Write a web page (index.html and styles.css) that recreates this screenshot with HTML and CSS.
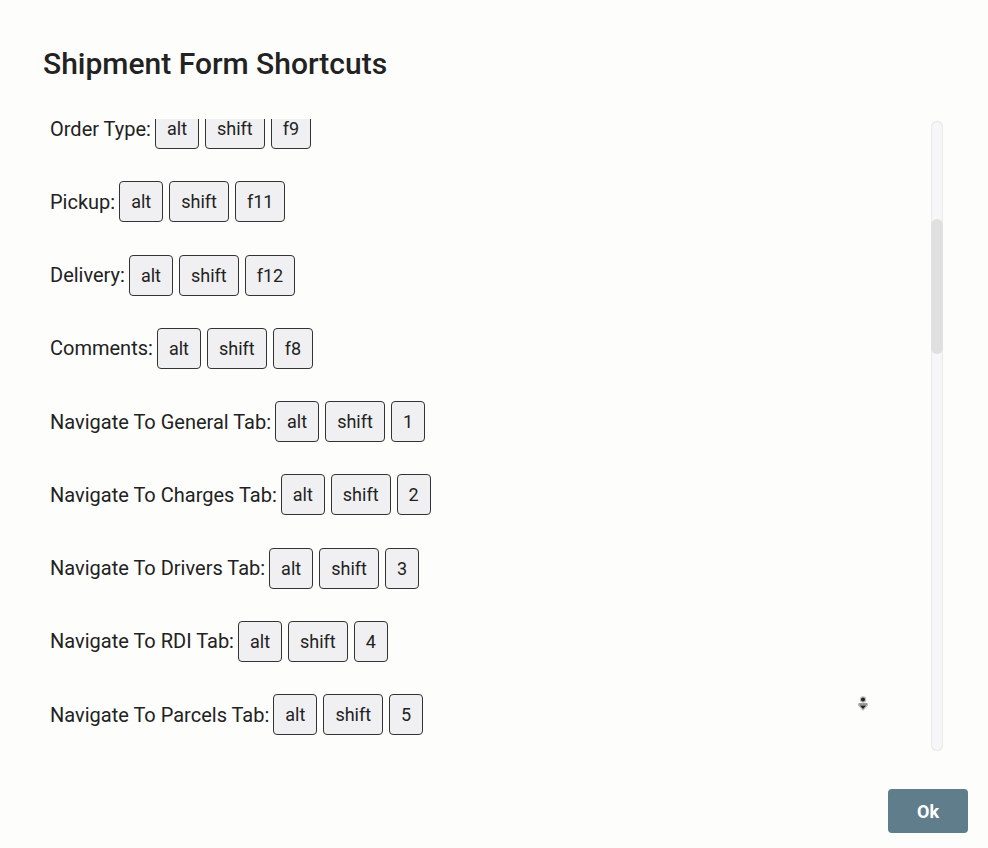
FILE: index.html
```html
<!DOCTYPE html>
<html lang="en">

<head>
    <meta charset="UTF-8">
    <title>Shipment Form Shortcuts</title>
    <link rel="stylesheet" href="styles.css">
</head>

<body>
    <div class="dialog">
        <h2 class="dialog-title">Shipment Form Shortcuts</h2>

        <div class="dialog-body">
            <div class="shortcut-list" id="list">
                <div class="shortcut">
                    <span class="shortcut-name">Order Type:</span>
                    <kbd>alt</kbd><kbd>shift</kbd><kbd>f9</kbd>
                </div>
                <div class="shortcut">
                    <span class="shortcut-name">Pickup:</span>
                    <kbd>alt</kbd><kbd>shift</kbd><kbd>f11</kbd>
                </div>
                <div class="shortcut">
                    <span class="shortcut-name">Delivery:</span>
                    <kbd>alt</kbd><kbd>shift</kbd><kbd>f12</kbd>
                </div>
                <div class="shortcut">
                    <span class="shortcut-name">Comments:</span>
                    <kbd>alt</kbd><kbd>shift</kbd><kbd>f8</kbd>
                </div>
                <div class="shortcut">
                    <span class="shortcut-name">Navigate To General Tab:</span>
                    <kbd>alt</kbd><kbd>shift</kbd><kbd>1</kbd>
                </div>
                <div class="shortcut">
                    <span class="shortcut-name">Navigate To Charges Tab:</span>
                    <kbd>alt</kbd><kbd>shift</kbd><kbd>2</kbd>
                </div>
                <div class="shortcut">
                    <span class="shortcut-name">Navigate To Drivers Tab:</span>
                    <kbd>alt</kbd><kbd>shift</kbd><kbd>3</kbd>
                </div>
                <div class="shortcut">
                    <span class="shortcut-name">Navigate To RDI Tab:</span>
                    <kbd>alt</kbd><kbd>shift</kbd><kbd>4</kbd>
                </div>
                <div class="shortcut">
                    <span class="shortcut-name">Navigate To Parcels Tab:</span>
                    <kbd>alt</kbd><kbd>shift</kbd><kbd>5</kbd>
                </div>
            </div>

            <div class="scroll-track">
                <div class="scroll-thumb"></div>
            </div>

            <!-- autoscroll cursor left over on the page -->
            <svg class="cursor" width="12" height="16" viewBox="0 0 12 16">
                <circle cx="6" cy="3.5" r="2.6" fill="#222" stroke="#bbb" stroke-width="1.2" />
                <path d="M1.5 9 L10.5 9 L6 14 Z" fill="#222" stroke="#bbb" stroke-width="1.2" stroke-linejoin="round" />
                <rect x="1.5" y="7.2" width="9" height="1.6" fill="#888" />
            </svg>
        </div>

        <div class="dialog-actions">
            <button class="btn-ok">Ok</button>
        </div>
    </div>
    <script>
        // list is scrolled a little, the first row is cut at the top
        document.getElementById('list').scrollTop = 11
    </script>
</body>

</html>
```
FILE: styles.css
```css
* {
    margin: 0;
    padding: 0;
    box-sizing: border-box;
}

body {
    background-color: #fdfdfc;
    font-family: Roboto, "Liberation Sans", Arial, sans-serif;
    color: #222;
    width: 988px;
    height: 848px;
    overflow: hidden;
}

.dialog {
    display: flex;
    flex-direction: column;
    height: 848px;
    padding: 46px 20px 15px 43px;
}

.dialog-title {
    font-size: 30px;
    font-weight: 500;
    line-height: 36px;
    color: #222;
    margin-bottom: 37px;
}

.dialog-body {
    position: relative;
    display: flex;
    height: 633px;
}

.shortcut-list {
    flex: 1;
    overflow: hidden;
    padding: 0 0 40px 7px;
    display: flex;
    flex-direction: column;
    gap: 32.25px;
}

.shortcut {
    display: flex;
    align-items: center;
    gap: 6px;
    height: 41px;
    flex-shrink: 0;
}

.shortcut-name {
    font-size: 20px;
    line-height: 18px;
    margin-right: -2px;
}

kbd {
    font-family: Roboto, "Liberation Sans", Arial, sans-serif;
    font-size: 18px;
    line-height: 39px;
    height: 41px;
    padding: 0 11px;
    border: 1px solid #333;
    border-radius: 4px;
    background-color: #f0f0f2;
    color: #222;
}

.scroll-track {
    width: 12px;
    margin: 2px 25px 1px 0;
    border-radius: 6px;
    background-color: #f7f7f9;
    box-shadow: inset 0 0 2px rgba(0, 0, 0, 0.18);
    padding-top: 98px;
}

.scroll-thumb {
    height: 135px;
    border-radius: 6px;
    background-color: #e0e0e0;
}

.cursor {
    position: absolute;
    left: 814px;
    top: 577px;
}

.dialog-actions {
    display: flex;
    justify-content: flex-end;
    margin-top: 37px;
}

.btn-ok {
    width: 80px;
    height: 44px;
    border: none;
    border-radius: 4px;
    background-color: #607d8b;
    color: #fff;
    font-family: Roboto, "Liberation Sans", Arial, sans-serif;
    font-size: 18px;
    font-weight: bold;
}
```
